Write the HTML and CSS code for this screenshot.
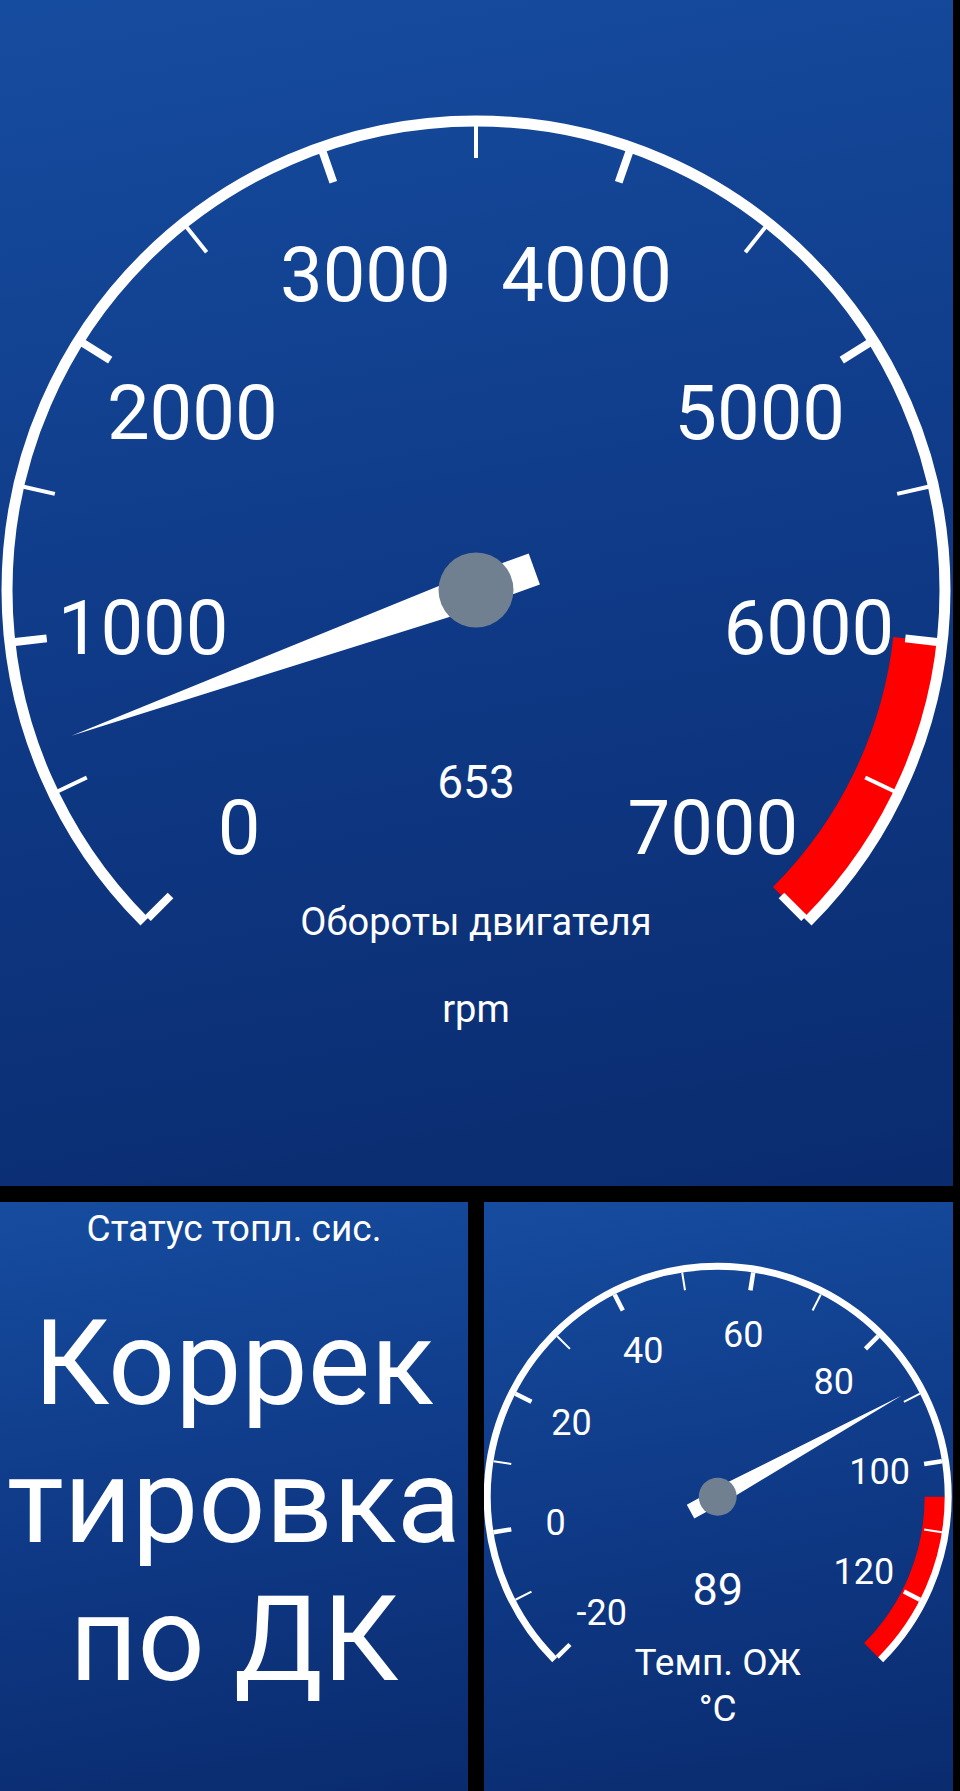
FILE: index.html
```html
<!DOCTYPE html>
<html lang="ru">
<head>
  <meta charset="UTF-8">
  <meta name="viewport" content="width=device-width, initial-scale=1.0">
  <title>Приборная панель</title>
  <link rel="stylesheet" href="styles.css">
</head>
<body>
  <div class="dash">
    <div class="panel panel-wide">
      <svg id="rpm-gauge" class="gauge" width="953" height="1186"></svg>
    </div>
    <div class="panel status">
      <div class="status-title">Статус топл. сис.</div>
      <div class="status-value">
        <span>Коррек</span>
        <span>тировка</span>
        <span>по ДК</span>
      </div>
    </div>
    <div class="panel">
      <svg id="temp-gauge" class="gauge" width="469" height="589"></svg>
    </div>
  </div>

  <script>
    const SVG_NS = "http://www.w3.org/2000/svg";

    function el(parent, tag, attrs, text) {
      const node = document.createElementNS(SVG_NS, tag);
      for (const key in attrs) node.setAttribute(key, attrs[key]);
      if (text !== undefined) node.textContent = text;
      parent.appendChild(node);
      return node;
    }

    function drawGauge(svg, g) {
      const angle = v => (225 - (v - g.min) / (g.max - g.min) * 270) * Math.PI / 180;
      const pt = (a, r) => [g.cx + r * Math.cos(a), g.cy - r * Math.sin(a)];
      const arc = (a1, a2, r) => {
        const [x1, y1] = pt(a1, r);
        const [x2, y2] = pt(a2, r);
        const large = (a1 - a2) > Math.PI ? 1 : 0;
        return `M ${x1} ${y1} A ${r} ${r} 0 ${large} 1 ${x2} ${y2}`;
      };

      // red zone sits under the scale
      el(svg, "path", {
        d: arc(angle(g.redFrom), angle(g.max), (g.redIn + g.redOut) / 2),
        class: "red-zone",
        "stroke-width": g.redOut - g.redIn
      });

      el(svg, "path", {
        d: arc(angle(g.min), angle(g.max), g.r),
        class: "scale-arc",
        "stroke-width": g.arcW
      });

      const count = (g.max - g.min) / g.minor;
      const every = g.major / g.minor;
      for (let i = 0; i <= count; i++) {
        const v = g.min + i * g.minor;
        const major = i % every === 0;
        if (i === count && !major) continue;
        const a = angle(v);
        const [x1, y1] = pt(a, g.tickIn);
        const [x2, y2] = pt(a, g.tickOut);
        el(svg, "line", {
          x1, y1, x2, y2,
          class: "tick",
          "stroke-width": major ? g.majorW : g.minorW
        });
        if (major) {
          const [lx, ly] = pt(a, g.labelR);
          el(svg, "text", {
            x: lx,
            y: ly + g.labelSize * 0.355,
            class: "gauge-text",
            "font-size": g.labelSize
          }, String(v));
        }
      }

      g.texts.forEach(t => {
        el(svg, "text", { x: g.cx, y: t.y, class: "gauge-text", "font-size": t.size }, t.text);
      });

      // needle: wide tail, tapering to a point
      const a = angle(g.value);
      const ux = Math.cos(a), uy = -Math.sin(a);
      const nx = Math.sin(a), ny = Math.cos(a);
      const h = g.needleW / 2;
      const k = g.needleLen * 0.072;
      const shape = [[-g.needleTail, h], [k, h], [g.needleLen, 0], [k, -h], [-g.needleTail, -h]];
      const points = shape.map(([d, w]) => {
        return (g.cx + d * ux + w * nx).toFixed(1) + "," + (g.cy + d * uy + w * ny).toFixed(1);
      }).join(" ");
      el(svg, "polygon", { points, class: "needle" });

      el(svg, "circle", { cx: g.cx, cy: g.cy, r: g.hubR, class: "hub" });
    }

    drawGauge(document.getElementById("rpm-gauge"), {
      cx: 476, cy: 590, r: 469, arcW: 11,
      min: 0, max: 7000, minor: 500, major: 1000,
      tickIn: 432, tickOut: 464, majorW: 8, minorW: 4,
      labelR: 335, labelSize: 76,
      redFrom: 6000, redIn: 420, redOut: 466,
      value: 653, needleLen: 430, needleTail: 62, needleW: 33, hubR: 37.5,
      texts: [
        { text: "653", y: 798, size: 46 },
        { text: "Обороты двигателя", y: 935, size: 38 },
        { text: "rpm", y: 1022, size: 38 }
      ]
    });

    drawGauge(document.getElementById("temp-gauge"), {
      cx: 233.7, cy: 294.7, r: 230.5, arcW: 7,
      min: -20, max: 130, minor: 10, major: 20,
      tickIn: 209, tickOut: 227, majorW: 4.5, minorW: 2,
      labelR: 164, labelSize: 36,
      redFrom: 105, redIn: 207, redOut: 228,
      value: 89, needleLen: 210, needleTail: 31, needleW: 15.7, hubR: 19,
      texts: [
        { text: "89", y: 403, size: 45 },
        { text: "Темп. ОЖ", y: 473, size: 37 },
        { text: "°C", y: 518.5, size: 37 }
      ]
    });
  </script>
</body>
</html>
```

FILE: styles.css
```css
body {
  margin: 0;
  background: #000;
  font-family: Roboto, "Noto Sans", sans-serif;
  color: #fff;
}
.dash {
  display: grid;
  grid-template-columns: 468px 469px;
  grid-template-rows: 1186px 589px;
  gap: 16px;
  width: 953px;
}
.panel {
  background: linear-gradient(170deg, #164c9f 0%, #0f3a87 50%, #0a2b6e 100%);
  overflow: hidden;
}
.panel-wide {
  grid-column: 1 / 3;
}
.gauge {
  display: block;
}
.status {
  display: flex;
  flex-direction: column;
  align-items: center;
  text-align: center;
}
.status-title {
  padding-top: 5px;
  font-size: 37px;
  line-height: 43px;
}
.status-value {
  margin-top: 45px;
  display: flex;
  flex-direction: column;
  font-size: 118px;
  line-height: 138px;
}
.scale-arc, .red-zone {
  fill: none;
}
.scale-arc {
  stroke: #fff;
}
.red-zone {
  stroke: #ff0000;
}
.tick {
  stroke: #fff;
}
.needle {
  fill: #fff;
}
.hub {
  fill: #708090;
}
.gauge-text {
  fill: #fff;
  font-family: Roboto, "Noto Sans", sans-serif;
  text-anchor: middle;
}
```
